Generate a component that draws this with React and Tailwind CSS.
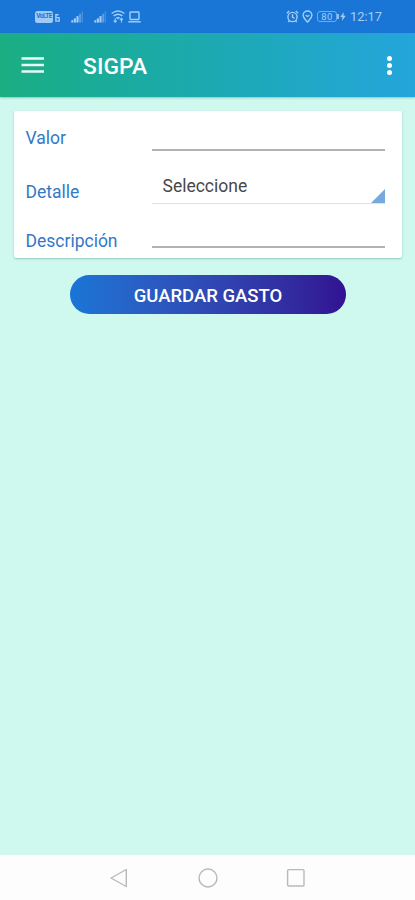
import React from "react";

const SignalIcon = ({ className }) => (
  <svg className={className} viewBox="0 0 14 13" fill="currentColor" aria-hidden>
    <rect x="0.3" y="10" width="2.1" height="2.5" />
    <rect x="3" y="8" width="2.3" height="4.5" />
    <rect x="5.9" y="5.5" width="2.2" height="7" />
    <rect x="8.8" y="3" width="1.9" height="9.5" opacity="0.5" />
    <rect x="11.4" y="0.5" width="1.6" height="12" opacity="0.3" />
  </svg>
);

const StatusBar = () => (
  <div className="flex h-[33px] shrink-0 items-center justify-between bg-[#1976d6] pr-[33px] pl-[35px] text-[#a5cdf6]">
    <div className="flex h-[13px] items-center">
      <span className="flex h-[12px] w-[18px] items-center justify-center rounded-[2.5px] bg-[#9fcaf5] text-[6.5px] leading-none font-bold tracking-[-0.5px] text-[#1976d6]">
        VoLTE
      </span>
      <svg className="mt-[2px] ml-[2px] h-[8px] w-[5px]" viewBox="0 0 5 8" fill="none" stroke="currentColor" strokeWidth="1.4" aria-hidden>
        <path d="M3.6 0.8H0.9V7.1H4.1V3.6H0.9" />
      </svg>
      <SignalIcon className="ml-[11px] h-[12px] w-[13px]" />
      <SignalIcon className="ml-[10px] h-[12px] w-[13px]" />
      <svg className="ml-[4px] h-[13px] w-[14px]" viewBox="0 0 14 13" fill="none" stroke="currentColor" strokeWidth="1.4" aria-hidden>
        <path d="M0.6 3.5C4.5 0.5 9.5 0.5 13.4 3.5" />
        <path d="M2.6 5.9C5.2 3.9 8.8 3.9 11.4 5.9" />
        <path d="M4.6 7.6C6.2 6.7 7.8 6.7 9.4 7.6L7 9.6Z" fill="currentColor" stroke="none" />
        <path d="M4.2 8.2V12.2M2.7 10.7L4.2 12.2 5.7 10.7M10.4 12.4V8.4M8.9 9.9L10.4 8.4 11.9 9.9" strokeWidth="1.1" />
      </svg>
      <svg className="ml-[3px] h-[12px] w-[13px]" viewBox="0 0 13 12" fill="none" stroke="currentColor" strokeWidth="1.4" aria-hidden>
        <rect x="2" y="1" width="9" height="7.5" rx="0.7" />
        <path d="M0.3 10.8H12.7" />
      </svg>
    </div>
    <div className="flex h-[13px] items-center">
      <svg className="h-[13px] w-[13px]" viewBox="0 0 13 13" fill="none" stroke="currentColor" strokeWidth="1.4" aria-hidden>
        <circle cx="6.5" cy="7" r="4.6" />
        <path d="M6.5 4.3V7.2L8.5 8.5M0.8 3.2L3.2 1M9.8 1L12.2 3.2M3.4 10.5L2.3 12M9.6 10.5L10.7 12" />
      </svg>
      <svg className="ml-[3px] h-[13px] w-[11px]" viewBox="0 0 11 13" fill="none" stroke="currentColor" strokeWidth="1.4" aria-hidden>
        <path d="M5.5 12C3.7 9.8 1.1 8 1.1 5.2A4.4 4.2 0 0 1 9.9 5.2C9.9 8 7.3 9.8 5.5 12Z" />
        <path d="M3.7 5.2 5.5 6.5 7.3 5.2" />
      </svg>
      <span className="ml-[4px] flex h-[11px] w-[20px] items-center justify-center rounded-[3px] border border-[#6faceb] text-[9.5px] leading-none tracking-[0.5px]">
        80
      </span>
      <span className="h-[5px] w-[2px] bg-[#8dbff2]" />
      <svg className="ml-[1px] h-[9px] w-[6px]" viewBox="0 0 6 9" fill="currentColor" aria-hidden>
        <path d="M3.8 0 0.3 5H2.5L2 9 5.7 3.8H3.4Z" />
      </svg>
      <span className="ml-[4px] w-[32px] pt-[1px] text-[12.8px] leading-none whitespace-nowrap">12:17</span>
    </div>
  </div>
);

const Toolbar = () => (
  <header className="z-10 flex h-[64px] shrink-0 items-center bg-linear-to-r from-[#1bae82] via-[#1da9b0] to-[#25a5dc] pr-[23px] pl-[21px] text-white shadow-[0_1px_2px_rgba(0,80,80,0.3)]">
    <svg className="h-[18px] w-[23px]" viewBox="0 0 23 18" fill="none" stroke="#e9faf5" strokeWidth="2.5" role="button" aria-label="Menu">
      <path d="M0.5 2.5H23M0.5 9H23M0.5 15.5H23" />
    </svg>
    <h1 className="ml-[39px] pt-[5px] text-[22.8px] leading-none font-medium tracking-[0.1px]">SIGPA</h1>
    <button type="button" aria-label="Opciones" className="ml-auto flex flex-col gap-[2px]">
      <span className="h-[5px] w-[5px] rounded-full bg-white" />
      <span className="h-[5px] w-[5px] rounded-full bg-white" />
      <span className="h-[5px] w-[5px] rounded-full bg-white" />
    </button>
  </header>
);

const ExpenseForm = () => (
  <form className="flex flex-col items-center pt-[14px]">
    <div className="h-[147px] w-[388px] rounded-[2px] bg-white pr-[17px] pl-[12px] text-[17.5px] leading-[22px] text-[#3279c8] shadow-[0_1px_2px_rgba(0,90,80,0.3)]">
      <div className="flex h-[40px]">
        <label className="w-[126px] pt-[16px]">Valor</label>
        <div className="flex-1 border-b-2 border-[#b2b2b2]" />
      </div>
      <div className="flex h-[53px]">
        <label className="w-[126px] pt-[30px]">Detalle</label>
        <div className="flex flex-1 items-end justify-between border-b border-[#d8e5e8] pl-[11px]">
          <span className="mb-[6px] text-[#484848]">Seleccione</span>
          <svg className="h-[14px] w-[14px]" viewBox="0 0 14 14" fill="#76a9de" aria-hidden>
            <path d="M14 0V14H0Z" />
          </svg>
        </div>
      </div>
      <div className="flex h-[44px]">
        <label className="w-[126px] pt-[26px]">Descripción</label>
        <div className="flex-1 border-b-2 border-[#b2b2b2]" />
      </div>
    </div>
    <button
      type="button"
      className="mt-[17px] h-[39px] w-[276px] rounded-full bg-linear-to-r from-[#1976d6] to-[#311292] pt-[4px] pl-[1px] text-[18.5px] font-medium text-white"
    >
      GUARDAR GASTO
    </button>
  </form>
);

const NavigationBar = () => (
  <nav className="flex h-[45px] shrink-0 items-center justify-center gap-[68px] bg-[#fdfdfd] text-[#b9b9b9]">
    <svg className="h-[20px] w-[20px]" viewBox="0 0 20 20" fill="none" stroke="currentColor" strokeWidth="1.4" strokeLinejoin="round" aria-hidden>
      <path d="M16.3 1.5V18.5L1 10Z" />
    </svg>
    <svg className="h-[20px] w-[20px]" viewBox="0 0 20 20" fill="none" stroke="currentColor" strokeWidth="1.4" aria-hidden>
      <circle cx="10" cy="10" r="9" />
    </svg>
    <svg className="h-[20px] w-[20px]" viewBox="0 0 20 20" fill="none" stroke="currentColor" strokeWidth="1.4" aria-hidden>
      <rect x="1.6" y="1.6" width="16.4" height="16.4" rx="1" />
    </svg>
  </nav>
);

const App = () => {
  return (
    <div className="flex h-[900px] w-[415px] flex-col overflow-hidden bg-[#cff8ee] font-[Roboto,sans-serif]">
      <StatusBar />
      <Toolbar />
      <main className="flex-1">
        <ExpenseForm />
      </main>
      <NavigationBar />
    </div>
  );
};

export default App;
